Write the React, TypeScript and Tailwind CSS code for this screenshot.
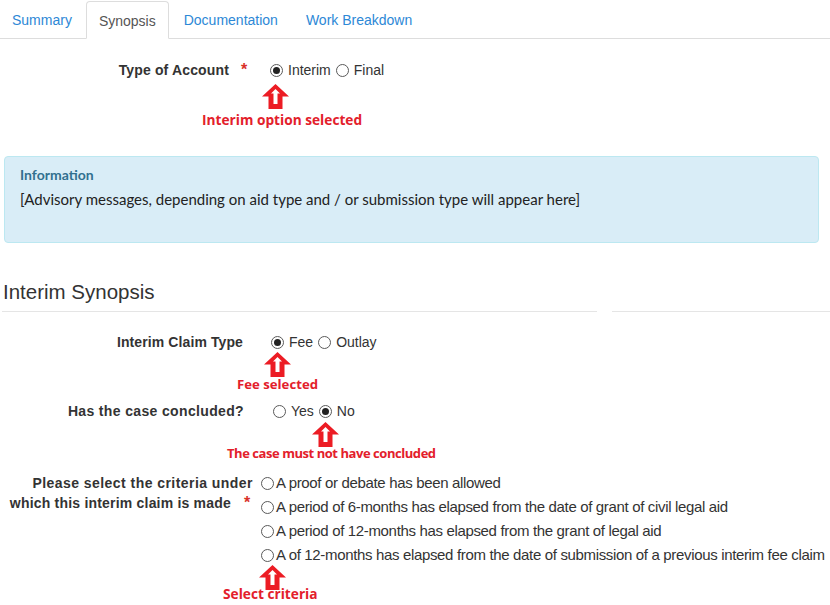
const ARIAL = { fontFamily: '"Liberation Sans", Arial, sans-serif' };
const NOTE = { fontFamily: '"Open Sans", "Noto Sans", sans-serif' };
const CAL = { fontFamily: 'Lato, "Noto Sans", sans-serif' };

function Radio({ checked = false }: { checked?: boolean }) {
  return (
    <span className="inline-flex h-[13px] w-[13px] shrink-0 items-center justify-center rounded-full border border-[#5a5a5a] bg-white">
      {checked && <span className="h-[7px] w-[7px] rounded-full bg-[#222]" />}
    </span>
  );
}

function Arrow({ className = "" }: { className?: string }) {
  return (
    <svg width="27" height="25" viewBox="0 0 27 25" className={className}>
      <polygon points="13.5,0 27,12.5 20.5,12.5 20.5,25 6.5,25 6.5,12.5 0,12.5" fill="#ec1c24" />
      <polygon points="13.5,5 18,9.5 15.5,9.5 15.5,20 11.5,20 11.5,9.5 9,9.5" fill="#fff" />
    </svg>
  );
}

function Note({ children, left }: { children: React.ReactNode; left: string }) {
  return (
    <div className={`${left} font-bold leading-[18px] text-[#e3202b]`} style={NOTE}>
      {children}
    </div>
  );
}

export default function App() {
  return (
    <div className="h-[605px] w-[830px] overflow-hidden bg-white text-[14px] text-[#333]" style={ARIAL}>
      {/* Tabs */}
      <div className="flex h-[39px] items-end gap-[2px] border-b border-[#ddd]">
        <a className="flex h-[37px] items-center px-3 pt-[2px] text-[#2d88d6]">Summary</a>
        <a className="-mb-px flex h-[38px] items-center rounded-t border border-b-white border-[#ddd] bg-white px-[12px] pt-[2px] text-[#555]">
          Synopsis
        </a>
        <a className="flex h-[37px] items-center px-[13px] pt-[2px] text-[#2d88d6]">Documentation</a>
        <a className="flex h-[37px] items-center px-[13px] pt-[2px] text-[#2d88d6]">Work Breakdown</a>
      </div>

      {/* Type of Account */}
      <div className="mt-[21px] flex h-[20px] items-center">
        <div className="w-[229px] text-right font-bold tracking-[0.15px]">Type of Account</div>
        <div className="w-[41px] pl-[12px] text-[16px] font-bold text-[#d9312a]">*</div>
        <div className="flex items-center gap-[5px]">
          <Radio checked />
          <span>Interim</span>
          <Radio />
          <span>Final</span>
        </div>
      </div>
      <Arrow className="ml-[262px] mt-[4px] block" />
      <Note left="ml-[202px] mt-[2px] text-[13.7px]">Interim option selected</Note>

      {/* Information */}
      <div className="ml-[4px] mt-[27px] h-[87px] w-[815px] rounded border border-[#bce8f1] bg-[#d9edf7] px-[15px] pt-[8px]" style={CAL}>
        <div className="text-[14px] font-bold leading-[20px] text-[#31708f]">Information</div>
        <div className="mt-[4px] text-[15px] leading-[20px] text-[#222]">
          [Advisory messages, depending on aid type and / or submission type will appear here]
        </div>
      </div>

      {/* Interim Synopsis */}
      <div className="mt-[38px] pl-[3px] text-[20.5px] leading-[22px] text-[#333]">Interim Synopsis</div>
      <div className="mt-[8px] flex gap-[15px]">
        <div className="ml-[2px] w-[595px] border-t border-[#e5e5e5]" />
        <div className="flex-1 border-t border-[#e5e5e5]" />
      </div>

      {/* Interim Claim Type */}
      <div className="mt-[20px] flex h-[20px] items-center">
        <div className="w-[243px] text-right font-bold tracking-[0.1px]">Interim Claim Type</div>
        <div className="ml-[28px] flex items-center gap-[5px]">
          <Radio checked />
          <span>Fee</span>
          <Radio />
          <span>Outlay</span>
        </div>
      </div>
      <Arrow className="ml-[264px] mt-[0px] block" />
      <Note left="ml-[237px] mt-[-2px] text-[13.2px]">Fee selected</Note>

      {/* Has the case concluded */}
      <div className="mt-[8px] flex h-[20px] items-center">
        <div className="w-[244px] text-right font-bold tracking-[0.35px]">Has the case concluded?</div>
        <div className="ml-[29px] flex items-center gap-[5px]">
          <Radio />
          <span>Yes</span>
          <Radio checked />
          <span>No</span>
        </div>
      </div>
      <Arrow className="ml-[312px] mt-[1px] block" />
      <Note left="ml-[227px] mt-[-3px] text-[13px] tracking-[-0.45px]">The case must not have concluded</Note>

      {/* Criteria */}
      <div className="mt-[11px] flex">
        <div className="flex w-[261px] shrink-0 flex-col font-bold leading-[20px]">
          <div className="w-[253px] text-right tracking-[0.45px]">Please select the criteria under</div>
          <div className="flex">
            <div className="w-[231px] text-right tracking-[0.2px]">which this interim claim is made</div>
            <div className="pl-[13px] text-[16px] text-[#d9312a]">*</div>
          </div>
        </div>
        <div className="flex flex-col gap-[4px] leading-[20px]">
          {[
            "A proof or debate has been allowed",
            "A period of 6-months has elapsed from the date of grant of civil legal aid",
            "A period of 12-months has elapsed from the grant of legal aid",
            "A of 12-months has elapsed from the date of submission of a previous interim fee claim",
          ].map((t) => (
            <div key={t} className="flex items-center gap-[2px] whitespace-nowrap">
              <Radio />
              <span className="text-[15px] tracking-[-0.34px]">{t}</span>
            </div>
          ))}
        </div>
      </div>
      <Arrow className="ml-[259px] mt-[0px] block" />
      <Note left="ml-[223px] mt-[-5px] text-[13.7px]">Select criteria</Note>
    </div>
  );
}
